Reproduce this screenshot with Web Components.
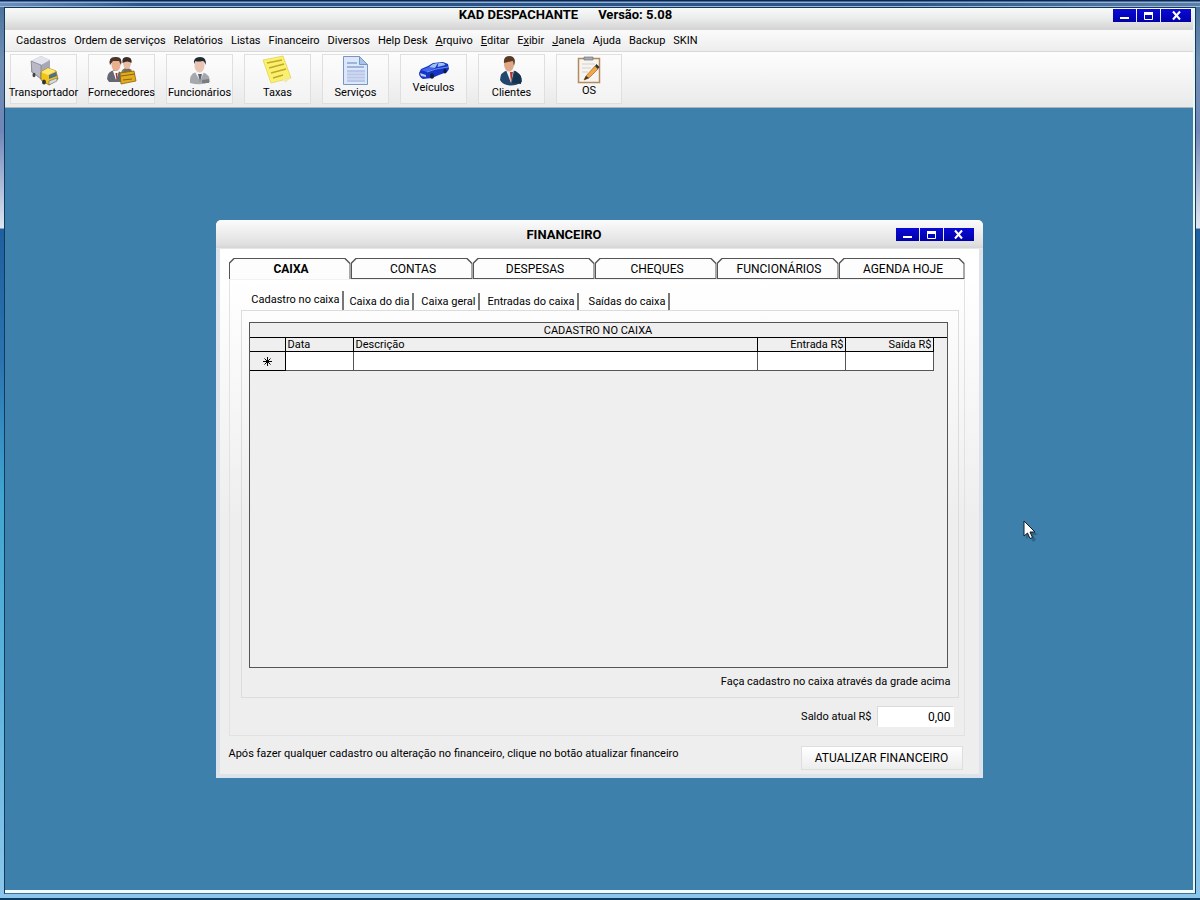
<!DOCTYPE html>
<html lang="pt-BR">
<head>
<meta charset="utf-8">
<title>KAD DESPACHANTE</title>
<style>
  body { margin: 0; font: 11px/14px Roboto, "Liberation Sans", sans-serif; color: #000; }
</style>
</head>
<body>
<kad-app></kad-app>

<template id="t-app">
  <style>
    :host {
      display: flex; flex-direction: column; box-sizing: border-box; min-height: 100vh; padding: 1px 4px 2px 4px;
      background: linear-gradient(#48709c 0, #6f8fb4 60px, #7186b8 130px, #dfe6f2 227px, #1f5f9f 228px, #2b73b0 40%, #3fa5d0 55%, #5cb3dc 75%, #8cc6ec 100%);
      border-top: 1px solid #12244c; border-bottom: 2px solid #0d3a5e;
    }
    .strip { height: 5px; margin: 0 -4px; box-sizing: border-box; background: linear-gradient(90deg, #6f8fc0 0, #2a5486 12%, #2a5486 75%, #5c7fa8); border-top: 1px solid #8fb2d8; border-bottom: 1px solid #9fb8d6; }
    .frame { flex: 1; display: flex; flex-direction: column; border: 1px solid #123a5c; border-bottom-color: #3f6f94; margin-bottom: 2px; }
    .client { flex: 1; display: flex; flex-direction: column; border-right: 2px solid #e9f6f6; border-bottom: 3px solid #f2fbff; }
    kad-desktop { flex: 1; }
  </style>
  <div class="strip"></div>
  <div class="frame">
    <div class="client">
      <title-bar main><span slot="title">KAD DESPACHANTE</span><span slot="title">Versão: 5.08</span></title-bar>
      <menu-bar></menu-bar>
      <tool-bar></tool-bar>
      <kad-desktop>
        <finance-window></finance-window>
      </kad-desktop>
    </div>
  </div>
</template>

<template id="t-title">
  <style>
    :host { display: flex; align-items: center; height: 29px; box-sizing: border-box; padding: 0 9px 0 17px; border-radius: 5px 5px 0 0; background: linear-gradient(#fcfcfc 0, #efefef 40%, #e0e0e0 85%, #d6d6d6 100%); border-bottom: 1px solid #e6e6e6; }
    :host([main]) { height: 22px; padding: 0 2px 0 13px; border-radius: 0; border-bottom: 0; align-items: flex-start; background: linear-gradient(#f8faf9 0, #ebedec 45%, #dedede 75%, #d4d4d4 100%); }
    .text { flex: 1; display: flex; justify-content: center; gap: 20px; margin: 0; font: bold 13px/15px Roboto, "Liberation Sans", sans-serif; }
    :host([main]) .text { line-height: 14px; }
  </style>
  <h1 class="text"><slot name="title"></slot></h1>
  <window-buttons></window-buttons>
</template>

<template id="t-winbtns">
  <style>
    :host { display: flex; gap: 1px; padding-top: 1px; }
    button { width: 23px; height: 13px; padding: 0; border: 0; background: linear-gradient(#0a0ad8, #0000a8); display: flex; justify-content: center; align-items: center; }
    button:last-child { width: 30px; }
    svg { display: block; }
  </style>
  <button type="button" aria-label="Minimizar"><svg width="13" height="13"><path d="M2 9h9" stroke="#fff" stroke-width="2"/></svg></button>
  <button type="button" aria-label="Maximizar"><svg width="13" height="13"><path d="M2.500 3v7.500h8V3" fill="none" stroke="#fff"/><path d="M2 4.500h9" stroke="#fff" stroke-width="3"/></svg></button>
  <button type="button" aria-label="Fechar"><svg width="13" height="13"><path d="M3 2.500l7 8M10 2.500l-7 8" stroke="#fff" stroke-width="2"/></svg></button>
</template>

<template id="t-menu">
  <style>
    :host { display: block; background: linear-gradient(#fbfbfb, #ededed); border-bottom: 1px solid #d8d8d8; }
    nav { display: flex; gap: 8px; padding: 4px 11px 3px; }
    a { color: inherit; text-decoration: none; white-space: nowrap; }
    u { text-decoration: underline; }
  </style>
  <nav aria-label="Menu principal">
    <a href="#">Cadastros</a><a href="#">Ordem de serviços</a><a href="#">Relatórios</a><a href="#">Listas</a><a href="#">Financeiro</a><a href="#">Diversos</a><a href="#">Help Desk</a><a href="#"><u>A</u>rquivo</a><a href="#"><u>E</u>ditar</a><a href="#">E<u>x</u>ibir</a><a href="#"><u>J</u>anela</a><a href="#">Ajuda</a><a href="#">Backup</a><a href="#">SKIN</a>
  </nav>
</template>

<template id="t-toolbar">
  <style>
    :host { display: flex; gap: 11px; padding: 2px 5px 3px; background: linear-gradient(#fdfdfd, #f4f4f4 50%, #e8e9e9); border-bottom: 1px solid #a9b4bb; }
  </style>
  <tool-button>
    <svg slot="icon" width="32" height="32" viewBox="0 0 32 32">
      <path d="M3 6L13 1l9 4v11l-9 8-10-7z" fill="#a8a8b4"/><path d="M3 6l10-5 9 4-9 5z" fill="#e4e4ee"/><path d="M3 6l10 4v14l-9-7z" fill="#b9b9c8" stroke="#75757f" stroke-width=".6"/>
      <path d="M13 17l7-4 8 3 2 8-9 6-8-5z" fill="#f1c41c" stroke="#8a6c12" stroke-width=".7"/><path d="M13 17l7-4 8 3-8 4z" fill="#ffe769"/><path d="M21 20l7-3 1 4-8 3z" fill="#536f88"/><path d="M21 26l8-3v3l-8 4z" fill="#d8dce0" stroke="#555" stroke-width=".5"/><ellipse cx="16" cy="27" rx="2" ry="2.6" fill="#333"/><ellipse cx="6" cy="20" rx="1.5" ry="2.3" fill="#444"/>
    </svg>Transportador</tool-button>
  <tool-button>
    <svg slot="icon" width="32" height="32" viewBox="0 0 32 32">
      <path d="M15 18q1-5 6-5t6 6v5H15z" fill="#777"/><ellipse cx="21" cy="8" rx="4" ry="6" fill="#e9bda4"/><path d="M16.500 8q-1-6 4-6 6 0 5 6-4-3-9 0z" fill="#3b2c26"/>
      <path d="M1 24q0-8 8-9 8 1 8 9v3H3z" fill="#676773"/><path d="M7 16l3 9 3-9z" fill="#fff"/><path d="M9.500 18l1 7 1-7z" fill="#b22a24"/><ellipse cx="10" cy="10" rx="4.500" ry="6" fill="#e9b08f"/><path d="M4 10q-2-8 5-8 8-1 6 8l-2-4H7z" fill="#4f3326"/>
      <path d="M14 18l14-2 2 10-15 3z" fill="#e2ac1d" stroke="#886310" stroke-width=".8"/><path d="M19 17v-2h5v1M15 21l14-2M17 25l9-1" fill="none" stroke="#8a6412"/>
    </svg>Fornecedores</tool-button>
  <tool-button>
    <svg slot="icon" width="32" height="32" viewBox="0 0 32 32">
      <path d="M6 28q-1-9 6-11h6q8 2 8 10-9 4-20 1z" fill="#a5a8ad"/><path d="M11 17l5 9 4-9z" fill="#f2f4f6"/><path d="M14 19l2 8 2-8z" fill="#5d6670"/><path d="M18 25l7-1v4h-7z" fill="#777b82"/><ellipse cx="15.500" cy="10.500" rx="5" ry="7" fill="#eac4b2"/><path d="M10 9q-1-7 6-7 7 0 5.500 8-1-4-3-4-5 1-7 0z" fill="#222a30"/>
    </svg>Funcionários</tool-button>
  <tool-button>
    <svg slot="icon" width="32" height="32" viewBox="0 0 32 32">
      <path d="M1 5l20-4 8 22-20 5z" fill="#fbf06d" stroke="#e0cf4c" stroke-width=".7"/><path d="M5 8l15-3M7 13l15-4M9 18l15-4M11 23l10-3" stroke="#c1a72a" stroke-width="1.500"/><path d="M21 24l8-1-6 5z" fill="#ede9b8"/>
    </svg>Taxas</tool-button>
  <tool-button>
    <svg slot="icon" width="32" height="32" viewBox="0 0 32 32">
      <path d="M3.500 1.500h16l8 8v20h-24z" fill="#dce8f9" stroke="#7896c4"/><path d="M19.500 1.500v8h8z" fill="#a8c3ea" stroke="#7896c4"/><path d="M7 8h10M7 12h17" stroke="#87a4d2" stroke-width="1.500"/><path d="M7 15h18v12H7z" fill="#b9c6e8"/><path d="M7 18h18M7 21h18M7 24h18" stroke="#dbe4f6"/>
    </svg>Serviços</tool-button>
  <tool-button short>
    <svg slot="icon" width="32" height="24" viewBox="0 0 32 24">
      <path d="M1 15l2-4 7-3 5-3 10-1 5 2 1 5-2 3-8 3-7 3-9 1q-4-2-4-6z" fill="#1635c4"/><path d="M3 12l8-3 6 1-8 4z" fill="#4468ea"/><path d="M11 9l4-3 5-1-3 5zM20.500 5l5 0 2 2-8 2z" fill="#9ec1ef"/><path d="M9 14l9-3 12-2" stroke="#6d91f5" fill="none"/><ellipse cx="14" cy="18" rx="2" ry="2.800" fill="#111c42"/><ellipse cx="27" cy="13" rx="1.700" ry="2.500" fill="#111c42"/><path d="M2 15l6 2v2l-5-1z" fill="#b4c6f2"/>
    </svg>Veículos</tool-button>
  <tool-button>
    <svg slot="icon" width="32" height="32" viewBox="0 0 32 32">
      <path d="M4 25q0-8 8-10h4q10 2 10 12-8 5-15 3-5-1-7-5z" fill="#22476c"/><path d="M10 15l5 13 3-13z" fill="#e8f0f6"/><path d="M14 17l1 11 2-11z" fill="#b5342a"/><path d="M16 28l3-12 6 5v8z" fill="#17324f"/><ellipse cx="13" cy="9" rx="5" ry="7.500" fill="#dfa786"/><path d="M8 8q-1-7 6-7 7 1 4 10l-1-5q-5 1-9 2z" fill="#5a3a24"/>
    </svg>Clientes</tool-button>
  <tool-button narrow>
    <svg slot="icon" width="32" height="30" viewBox="0 0 32 30">
      <path d="M5.500 3.500h21v24h-21z" fill="#f6f4f1" stroke="#b38a5e" stroke-width="1.500"/><path d="M11 5V2h9v3z" fill="#a7a9ae" stroke="#747679" stroke-width=".7"/><path d="M9 9h13M9 13h9M9 17h6" stroke="#d4d0cb"/><path d="M13 21l9-10 3 3-9 9-5 2z" fill="#f2a64a" stroke="#a56624" stroke-width=".7"/><path d="M13 21l3 2-5 2zM22 11l1.500-2 3 3-1.500 2z" fill="#333"/>
    </svg>OS</tool-button>
</template>

<template id="t-tool">
  <style>
    :host { display: block; width: 67px; }
    :host([narrow]) { width: 66px; }
    button { display: flex; flex-direction: column; align-items: center; width: 100%; height: 50px; padding: 0; border: 1px solid #dfdfdf; background: linear-gradient(#fcfcfc, #f2f2f2); font: inherit; line-height: 12px; color: inherit; white-space: nowrap; }
    ::slotted(svg) { display: block; flex: none; }
    :host([short]) button { padding-top: 3px; }
  </style>
  <button type="button"><slot name="icon"></slot><span><slot></slot></span></button>
</template>

<template id="t-desktop">
  <style>
    :host { display: grid; place-items: center; background: #3d80ab; position: relative; }
    .cursor { position: absolute; left: 1018px; top: 412px; }
  </style>
  <slot></slot>
  <svg class="cursor" width="18" height="24" viewBox="0 0 18 24" aria-hidden="true"><path d="M3 4v15l4-3 3 6 3-2-3-5h5z" fill="#1f4c68" opacity=".5"/><path d="M1 1v15l3.500-3 2.500 5.500 2.500-1-2.500-5.500h5z" fill="#fff" stroke="#111d29"/></svg>
</template>

<template id="t-window">
  <style>
    :host { display: block; width: min(767px, 100%); background: linear-gradient(#fff 0, #fff 60px, #eee 300px); border-radius: 6px 6px 0 0; }
    .body { border: solid #dde3ea; border-width: 0 4px 4px 4px; padding: 9px 14px 4px 9px; }
    .panel { border: 1px solid #e2e2e2; border-top-color: #f2f2f2; padding: 10px 5px 8px 11px; }
    .sub { border: 1px solid #dcdcdc; padding: 11px 10px 8px 7px; }
    p { margin: 0; white-space: nowrap; }
    .hint { text-align: right; padding-top: 7px; margin-right: -3px; }
    .balance { display: flex; justify-content: flex-end; align-items: center; gap: 5px; padding: 8px 5px 0 0; }
    input { width: 77px; height: 21px; box-sizing: border-box; border: 1px solid #d9d9d9; border-right-color: #fff; border-bottom-color: #fff; background: #fff; padding: 0 2px; text-align: right; font: 12px/18px Roboto, "Liberation Sans", sans-serif; color: #000; }
    .foot { display: flex; justify-content: space-between; padding: 10px 2px 0 0; }
    .foot p { padding-top: 1px; }
    .foot button { width: 162px; height: 24px; border: 1px solid #dedede; background: linear-gradient(#fff, #ededed); font: 12px/16px Roboto, "Liberation Sans", sans-serif; padding: 0; color: #000; }
  </style>
  <title-bar><span slot="title">FINANCEIRO</span></title-bar>
  <div class="body">
    <main-tabs></main-tabs>
    <div class="panel">
      <sub-tabs></sub-tabs>
      <div class="sub">
        <cash-grid></cash-grid>
        <p class="hint">Faça cadastro no caixa através da grade acima</p>
      </div>
      <div class="balance"><label for="saldo">Saldo atual R$</label><input id="saldo" value="0,00"></div>
    </div>
    <div class="foot">
      <p>Após fazer qualquer cadastro ou alteração no financeiro, clique no botão atualizar financeiro</p>
      <button type="button">ATUALIZAR FINANCEIRO</button>
    </div>
  </div>
</template>

<template id="t-maintabs">
  <style>
    :host { display: grid; grid-template-columns: repeat(5, 122fr) 126fr; }
    button { --cut: polygon(0 100%, 0 5px, 5px 0, calc(100% - 5px) 0, 100% 5px, 100% 100%); position: relative; height: 21px; border: 0; padding: 0 0 0 3px; background: #555; clip-path: var(--cut); font: 12px/20px Roboto, "Liberation Sans", sans-serif; color: #000; }
    button::before { content: ""; position: absolute; inset: 1px; background: #fdfdfd; clip-path: var(--cut); }
    button[aria-selected="true"]::before { bottom: 0; }
    button[aria-selected="true"] { font-weight: bold; }
    span { position: relative; }
  </style>
  <button role="tab" aria-selected="true"><span>CAIXA</span></button>
  <button role="tab"><span>CONTAS</span></button>
  <button role="tab"><span>DESPESAS</span></button>
  <button role="tab"><span>CHEQUES</span></button>
  <button role="tab"><span>FUNCIONÁRIOS</span></button>
  <button role="tab"><span>AGENDA HOJE</span></button>
</template>

<template id="t-subtabs">
  <style>
    :host { display: flex; align-items: flex-end; height: 20px; padding-left: 7px; }
    button { height: 17px; box-sizing: border-box; border: 0; border-right: 2px solid #777; background: none; padding: 0 2px 0 0; font: inherit; color: inherit; text-align: right; white-space: nowrap; }
    .a { height: 19px; width: 96px; padding-bottom: 2px; }
    .b { width: 70px; } .c { width: 66px; } .d { width: 99px; } .e { width: 91px; }
  </style>
  <button role="tab" class="a" aria-selected="true">Cadastro no caixa</button>
  <button role="tab" class="b">Caixa do dia</button>
  <button role="tab" class="c">Caixa geral</button>
  <button role="tab" class="d">Entradas do caixa</button>
  <button role="tab" class="e">Saídas do caixa</button>
</template>

<template id="t-grid">
  <style>
    :host { display: block; min-height: 344px; border: 1px solid #555; background: #efefef; }
    table { width: 100%; table-layout: fixed; border-collapse: separate; border-spacing: 0; }
    caption { height: 14px; border-bottom: 1px solid #000; font: 11px/15px Roboto, "Liberation Sans", sans-serif; }
    th { height: 13px; padding: 0 2px; font-weight: normal; line-height: 13px; text-align: left; border-right: 1px solid #000; border-bottom: 1px solid #000; }
    td { height: 18px; padding: 0; background: #fff; border-right: 1px solid #555; border-bottom: 1px solid #555; }
    .num { text-align: right; padding-right: 1px; }
    .mark { background: #efefef; border-right-color: #000; border-bottom-color: #000; }
    .mark svg { display: block; margin: auto; }
    .end { border: 0; background: none; }
    input { display: block; width: 100%; height: 18px; box-sizing: border-box; border: 0; padding: 0 2px; background: none; font: inherit; }
  </style>
  <table>
    <caption>CADASTRO NO CAIXA</caption>
    <colgroup><col style="width:36px"><col style="width:68px"><col><col style="width:88px"><col style="width:88px"><col style="width:13px"></colgroup>
    <thead><tr><th></th><th>Data</th><th>Descrição</th><th class="num">Entrada R$</th><th class="num">Saída R$</th><th class="end"></th></tr></thead>
    <tbody><tr>
      <td class="mark"><svg width="11" height="11" aria-label="Novo registro"><path d="M5.500 1v9M1 5.500h9M2.500 2.500l6 6M8.500 2.500l-6 6" stroke="#000"/></svg></td>
      <td><input aria-label="Data"></td><td><input aria-label="Descrição"></td><td><input aria-label="Entrada R$"></td><td><input aria-label="Saída R$"></td><td class="end"></td>
    </tr></tbody>
  </table>
</template>

<script>
  const define = (name, templateId) => customElements.define(name, class extends HTMLElement {
    constructor() {
      super();
      this.attachShadow({ mode: "open" }).append(document.getElementById(templateId).content.cloneNode(true));
    }
  });
  define("window-buttons", "t-winbtns");
  define("title-bar", "t-title");
  define("menu-bar", "t-menu");
  define("tool-button", "t-tool");
  define("tool-bar", "t-toolbar");
  define("main-tabs", "t-maintabs");
  define("sub-tabs", "t-subtabs");
  define("cash-grid", "t-grid");
  define("finance-window", "t-window");
  define("kad-desktop", "t-desktop");
  define("kad-app", "t-app");
</script>
</body>
</html>
